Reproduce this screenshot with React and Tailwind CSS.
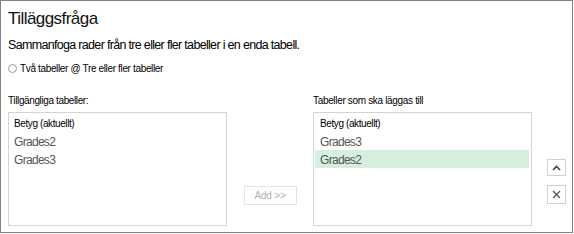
const leftItems = [
  { name: "Betyg (aktuellt)", current: true },
  { name: "Grades2" },
  { name: "Grades3" },
];

const rightItems = [
  { name: "Betyg (aktuellt)", current: true },
  { name: "Grades3" },
  { name: "Grades2", selected: true },
];

const ListItem = ({ item }) => (
  <div
    className={
      item.current
        ? "h-[18px] flex items-center px-[5px] text-[10px] tracking-[-0.4px] text-black"
        : `h-[18px] flex items-center px-[5px] pt-[2px] text-[12px] tracking-[-0.7px] text-[#555] ${
            item.selected ? "bg-[#d5eedf]" : ""
          }`
    }
  >
    {item.name}
  </div>
);

const App = () => {
  return (
    <div className="w-[574px] h-[234px] bg-white font-['Liberation_Sans',Arial,sans-serif]">
      <div className="w-[573px] h-[233px] border border-[#808080] pl-[7px] pt-[6px]">
        {/* HEADER */}
        <h1 className="text-[17px] tracking-[-0.55px] leading-[24px] text-[#111]">
          Tilläggsfråga
        </h1>
        <p className="mt-[6px] text-[12.5px] tracking-[-0.68px] leading-[16px] text-black">
          Sammanfoga rader från tre eller fler tabeller i en enda tabell.
        </p>

        {/* RADIO */}
        <div className="mt-[8px] flex items-center h-[14px] text-[10px] tracking-[-0.35px] text-black">
          <span className="w-[9px] h-[9px] rounded-full border border-[#999] mr-[3px]" />
          <span>Två tabeller @ Tre eller fler tabeller</span>
        </div>

        {/* LISTS */}
        <div className="mt-[19px] flex">
          <div className="w-[219px]">
            <div className="text-[10px] tracking-[-0.38px] leading-[14px] text-black mb-[4px]">
              Tillgängliga tabeller:
            </div>
            <div className="h-[114px] border border-[#d4d4d4] pt-[1px]">
              {leftItems.map((item, i) => (
                <ListItem key={i} item={item} />
              ))}
            </div>
          </div>

          <div className="w-[86px] flex items-end justify-center pb-[21px]">
            <button className="w-[53px] h-[19px] border border-[#e3e3e3] text-[10px] tracking-[-0.2px] text-[#b0b0b0] bg-white">
              Add &gt;&gt;
            </button>
          </div>

          <div className="w-[219px]">
            <div className="text-[10px] tracking-[-0.33px] leading-[14px] text-black mb-[4px]">
              Tabeller som ska läggas till
            </div>
            <div className="h-[114px] border border-[#d4d4d4] pt-[1px] pl-[1px] pr-[2px]">
              {rightItems.map((item, i) => (
                <ListItem key={i} item={item} />
              ))}
            </div>
          </div>

          <div className="ml-[15px] flex flex-col gap-[9px] pt-[65px]">
            <button className="w-[19px] h-[17px] border border-[#d0d0d0] bg-white flex items-center justify-center">
              <svg width="9" height="6" viewBox="0 0 9 6">
                <path d="M1 5 L4.5 1.5 L8 5" stroke="#444" strokeWidth="1.6" fill="none" />
              </svg>
            </button>
            <button className="w-[19px] h-[19px] border border-[#d0d0d0] bg-white flex items-center justify-center">
              <svg width="9" height="9" viewBox="0 0 9 9">
                <path d="M1 1 L8 8 M8 1 L1 8" stroke="#555" strokeWidth="1.3" fill="none" />
              </svg>
            </button>
          </div>
        </div>
      </div>
    </div>
  );
};

export default App;
